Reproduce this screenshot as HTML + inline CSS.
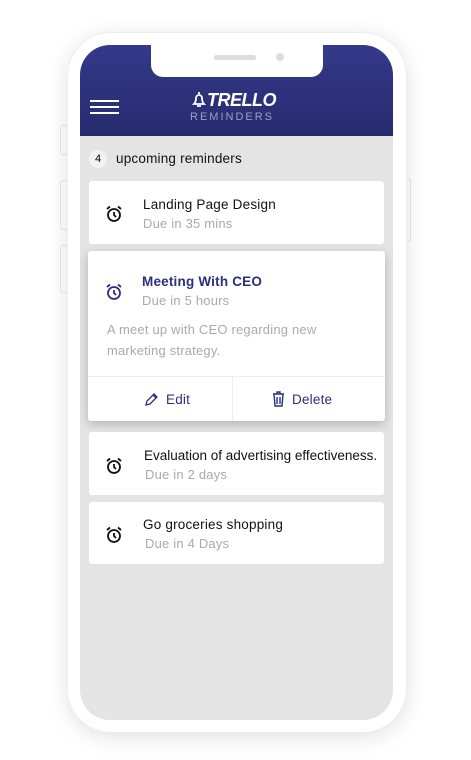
<!DOCTYPE html>
<html><head><style>
*{margin:0;padding:0;box-sizing:border-box}
body{width:471px;height:760px;background:#fff;position:relative;overflow:hidden;font-family:"Liberation Sans",sans-serif}
.phone{position:absolute;left:67px;top:32px;width:340px;height:701px;background:#fff;border-radius:44px;box-shadow:0 4px 22px rgba(0,0,0,.12);border:1px solid #eee}
.btn{position:absolute;background:#fff;border:1px solid #e8e8e8;border-radius:3px;width:10px}
.screen{position:absolute;left:80px;top:45px;width:313px;height:675px;background:#e4e4e4;border-radius:30px;overflow:hidden}
.hdr{position:absolute;left:0;top:0;width:313px;height:91px;background:linear-gradient(#34398a,#272b6e)}
.notch{position:absolute;left:71px;top:0;width:172px;height:32px;background:#fff;border-radius:0 0 12px 12px}
.ham{position:absolute;left:10px;width:29px;height:2px;background:#fff}
.card{position:absolute;left:9px;width:295px;background:#fff;border-radius:3px}
.t{position:absolute;font-size:13.5px;color:#111;letter-spacing:.2px;white-space:nowrap}
.s{position:absolute;font-size:13px;color:#aaa;letter-spacing:.2px;white-space:nowrap}
svg.al{position:absolute}
</style></head><body>
<div class="btn" style="left:60px;top:125px;height:30px"></div>
<div class="btn" style="left:60px;top:180px;height:50px"></div>
<div class="btn" style="left:60px;top:245px;height:48px"></div>
<div class="btn" style="left:401px;top:178px;height:64px"></div>
<div class="phone"></div>
<div class="screen">
 <div class="hdr">
  <div class="notch"><div style="position:absolute;left:63px;top:10px;width:42px;height:5px;border-radius:3px;background:#ddd"></div><div style="position:absolute;left:125px;top:8px;width:8px;height:8px;border-radius:50%;background:#ddd"></div></div>
  <div class="ham" style="top:55px"></div><div class="ham" style="top:61px"></div><div class="ham" style="top:67px"></div>
  <svg style="position:absolute;left:111px;top:46px" width="16" height="17" viewBox="0 0 16 17"><path d="M8 1v2M3 13c1-1 2-3 2-6a3 3 0 016 0c0 3 1 5 2 6zM6 15h4" fill="none" stroke="#fff" stroke-width="1.8"/></svg>
  <div style="position:absolute;left:127px;top:45px;color:#fff;font-style:italic;font-weight:bold;font-size:18px;letter-spacing:-0.5px">TRELLO</div>
  <div style="position:absolute;left:110px;top:66px;color:#9aa0c8;font-size:11px;letter-spacing:2px">REMINDERS</div>
 </div>
 <div style="position:absolute;left:9px;top:105px;width:18px;height:18px;border-radius:50%;background:#f2f2f2;font-size:11px;text-align:center;line-height:18px">4</div>
 <div style="position:absolute;left:36px;top:106px;font-size:13.5px;color:#111;letter-spacing:.2px">upcoming reminders</div>

 <div class="card" style="top:136px;height:63px">
  <svg class="al" style="left:16px;top:24px" width="18" height="18" viewBox="0 0 18 18"><circle cx="9" cy="10" r="6" fill="none" stroke="#111" stroke-width="1.8"/><path d="M9 7v3l2 2M2 4l3-2.5M16 4l-3-2.5" fill="none" stroke="#111" stroke-width="1.8"/></svg>
  <div class="t" style="left:54px;top:16px">Landing Page Design</div>
  <div class="s" style="left:54px;top:35px">Due in 35 mins</div>
 </div>
 <div class="card" style="top:206px;height:170px;left:8px;width:297px;box-shadow:0 3px 10px rgba(0,0,0,.22)">
  <svg class="al" style="left:17px;top:32px" width="18" height="18" viewBox="0 0 18 18"><circle cx="9" cy="10" r="6" fill="none" stroke="#2a2f7e" stroke-width="1.8"/><path d="M9 7v3l2 2M2 4l3-2.5M16 4l-3-2.5" fill="none" stroke="#2a2f7e" stroke-width="1.8"/></svg>
  <div class="t" style="left:54px;top:23px;color:#2a2f7e;font-weight:bold">Meeting With CEO</div>
  <div class="s" style="left:54px;top:42px">Due in 5 hours</div>
  <div class="s" style="left:19px;top:68px;line-height:21px;color:#aaa">A meet up with CEO regarding new<br>marketing strategy.</div>
  <div style="position:absolute;left:0;top:125px;width:297px;border-top:1px solid #eee"></div>
  <div style="position:absolute;left:144px;top:125px;height:45px;border-left:1px solid #eee"></div>
  <svg class="al" style="left:56px;top:141px" width="15" height="15" viewBox="0 0 15 15"><path d="M2 13l1-4 7-7 3 3-7 7zM9 3l3 3" fill="none" stroke="#2a2f7e" stroke-width="1.3"/></svg>
  <div class="t" style="left:78px;top:141px;color:#2a2f7e">Edit</div>
  <svg class="al" style="left:184px;top:140px" width="13" height="16" viewBox="0 0 13 16"><path d="M1 3h11M5 3V1h3v2M2 3l1 12h7l1-12M5 6v7M8 6v7" fill="none" stroke="#2a2f7e" stroke-width="1.4"/></svg>
  <div class="t" style="left:204px;top:141px;color:#2a2f7e">Delete</div>
 </div>
 <div class="card" style="top:387px;height:63px">
  <svg class="al" style="left:16px;top:25px" width="18" height="18" viewBox="0 0 18 18"><circle cx="9" cy="10" r="6" fill="none" stroke="#111" stroke-width="1.8"/><path d="M9 7v3l2 2M2 4l3-2.5M16 4l-3-2.5" fill="none" stroke="#111" stroke-width="1.8"/></svg>
  <div class="t" style="left:55px;top:16px;letter-spacing:0">Evaluation of advertising effectiveness.</div>
  <div class="s" style="left:56px;top:35px">Due in 2 days</div>
 </div>
 <div class="card" style="top:457px;height:62px">
  <svg class="al" style="left:16px;top:24px" width="18" height="18" viewBox="0 0 18 18"><circle cx="9" cy="10" r="6" fill="none" stroke="#111" stroke-width="1.8"/><path d="M9 7v3l2 2M2 4l3-2.5M16 4l-3-2.5" fill="none" stroke="#111" stroke-width="1.8"/></svg>
  <div class="t" style="left:54px;top:15px">Go groceries shopping</div>
  <div class="s" style="left:56px;top:34px">Due in 4 Days</div>
 </div>
</div>
</body></html>
